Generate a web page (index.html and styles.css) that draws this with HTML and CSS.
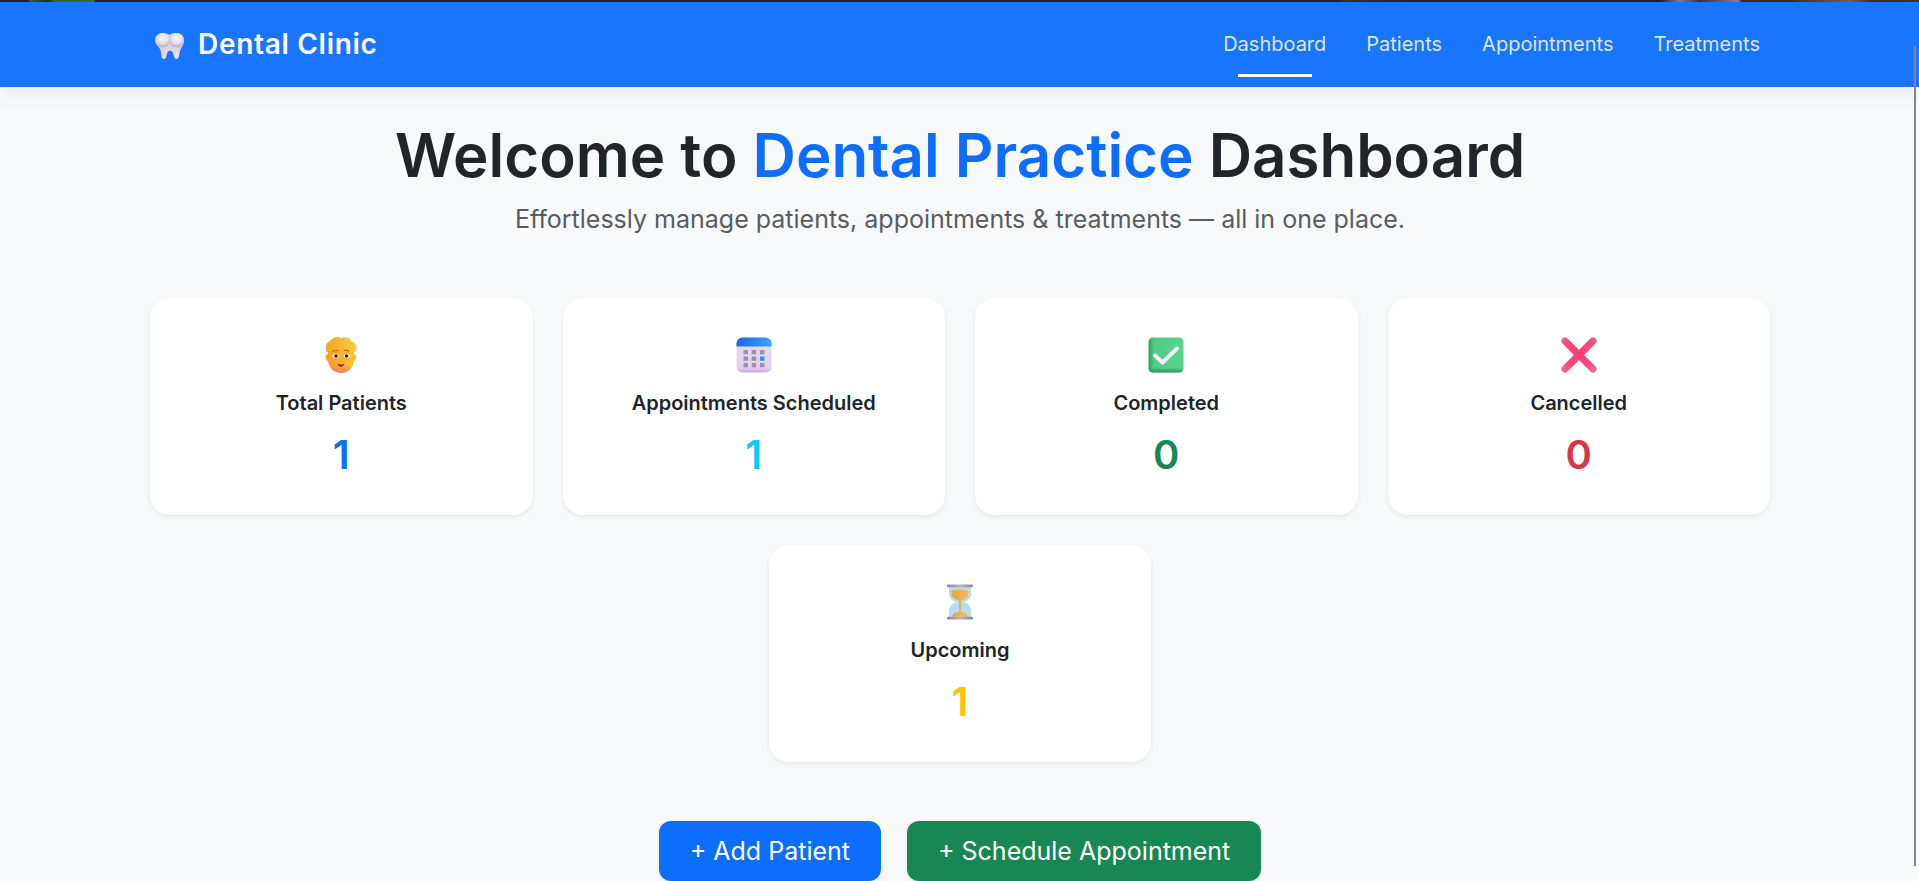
FILE: index.html
```html
<!DOCTYPE html>
<html lang="en">
<head>
<meta charset="utf-8">
<title>Dental Clinic</title>
<link rel="stylesheet" href="styles.css">
</head>
<body>
<div class="top-strip"></div>
<nav class="navbar">
  <a class="brand">
    <svg class="tooth" viewBox="0 0 28 26">
      <defs>
        <linearGradient id="t1" x1="0" y1="0" x2="0" y2="1"><stop offset="0" stop-color="#d5d0d8"/><stop offset=".5" stop-color="#dbd0e0"/><stop offset="1" stop-color="#efdcfa"/></linearGradient>
        <radialGradient id="t2" cx=".5" cy=".35" r=".6"><stop offset="0" stop-color="#f6f4f5"/><stop offset=".6" stop-color="#e4e1e5"/><stop offset="1" stop-color="#bab4c0"/></radialGradient>
      </defs>
      <path d="M0 7C0 2 4 0 8 0c3 0 5 1 6 2 1-1 3-2 6-2 5 0 8 3 8 7 0 4-2 6-3 8-2 4-1 10-4 10-4 0-2-8-6.500-8s-2 8-6 8C5 25 7 18 4 14 2 12 0 10 0 7z" fill="url(#t1)"/>
      <circle cx="7.500" cy="7" r="7" fill="url(#t2)"/><circle cx="21" cy="7" r="7" fill="url(#t2)"/>
    </svg>
    <span>Dental Clinic</span>
  </a>
  <div class="links">
    <a class="link active">Dashboard</a>
    <a class="link">Patients</a>
    <a class="link">Appointments</a>
    <a class="link">Treatments</a>
  </div>
</nav>
<main class="page">
  <h1 class="title">Welcome to <span class="accent">Dental Practice</span> Dashboard</h1>
  <p class="subtitle">Effortlessly manage patients, appointments &amp; treatments — all in one place.</p>
  <section class="cards">
    <article class="card">
      <svg class="icon" viewBox="0 0 36 36">
        <defs>
          <linearGradient id="p1" x1="0" y1=".3" x2="1" y2="0"><stop offset="0" stop-color="#f99b2e"/><stop offset="1" stop-color="#ffd02b"/></linearGradient>
          <linearGradient id="p2" x1="0" y1="0" x2="0" y2="1"><stop offset=".7" stop-color="#ef8068" stop-opacity="0"/><stop offset="1" stop-color="#ef8068"/></linearGradient>
          <linearGradient id="p3" x1="0" y1="0" x2="1" y2="0"><stop offset="0" stop-color="#e8ac27"/><stop offset="1" stop-color="#f6d03c"/></linearGradient>
        </defs>
        <path d="M5 5h26v12c3 0 3 6 0 7-1 7-6 12-13 12S6 31 5 24c-3-1-3-7 0-7z" fill="url(#p1)"/>
        <path d="M5 11h26v13c-1 7-6 12-13 12S6 31 5 24z" fill="url(#p2)"/>
        <path d="M4 16C2 12 2 6 7 4c3-4 8-5 11-3 5-2 9 0 10 3 6 2 7 8 4 12-1-2-1-4-3-5-4 1-7 0-9-3-4-1-8 0-11 2-2 1-4 4-5 6z" fill="url(#p3)"/>
        <path d="M9.500 14.800q3-2.500 6-1M21 13.800q3-1.500 5 1" fill="none" stroke="#b56727" stroke-width="1.200"/>
        <ellipse cx="12.500" cy="19" rx="3.300" ry="2.100" fill="#fff"/><ellipse cx="24" cy="19" rx="3.300" ry="2.100" fill="#fff"/>
        <circle cx="13" cy="19" r="1.800" fill="#321c26"/><circle cx="23.600" cy="19" r="1.800" fill="#321c26"/>
        <path d="M14.500 26.800q3.500 1.500 7 0-1 3-3.500 3t-3.500-3z" fill="#971c58"/>
      </svg>
      <h2 class="label">Total Patients</h2><p class="value blue">1</p>
    </article>
    <article class="card">
      <svg class="icon" viewBox="0 0 36 36">
        <defs>
          <linearGradient id="c1" x1="0" y1="0" x2="0" y2="1"><stop offset="0" stop-color="#e2dced"/><stop offset=".85" stop-color="#e3d2ee"/><stop offset="1" stop-color="#cfa8dc"/></linearGradient>
          <linearGradient id="c2"><stop offset="0" stop-color="#1769e6"/><stop offset="1" stop-color="#38a5ff"/></linearGradient>
        </defs>
        <rect x=".5" y=".5" width="35" height="35" rx="6" fill="url(#c1)"/>
        <path d="M.5 9.500v-3a6 6 0 0 1 6-6h23a6 6 0 0 1 6 6v3z" fill="url(#c2)"/>
        <path d="M7.500 13h4.500v4.200H7.500zM15.700 13h4.500v4.200h-4.500zM24 13h4.500v4.200H24zM7.500 19.500h4.500v4.200H7.500zM15.700 19.500h4.500v4.200h-4.500zM7.500 26h4.500v4.200H7.500zM15.700 26h4.500v4.200h-4.500zM24 26h4.500v4.200H24z" fill="#9c91aa"/>
        <path d="M24 19.500h4.500v4.200H24z" fill="#2492f5"/>
      </svg>
      <h2 class="label">Appointments Scheduled</h2><p class="value cyan">1</p>
    </article>
    <article class="card">
      <svg class="icon" viewBox="0 0 36 36">
        <defs><linearGradient id="k1" x1="0" y1="0" x2="1" y2="0"><stop offset="0" stop-color="#379b64"/><stop offset=".15" stop-color="#50cb86"/><stop offset="1" stop-color="#58d48d"/></linearGradient>
        <linearGradient id="k2" x1="0" y1="0" x2="0" y2="1"><stop offset=".86" stop-color="#268655" stop-opacity="0"/><stop offset="1" stop-color="#268655" stop-opacity=".8"/></linearGradient></defs>
        <rect x=".5" y=".5" width="35" height="35" rx="4.500" fill="url(#k1)"/>
        <rect x=".5" y=".5" width="35" height="35" rx="4.500" fill="url(#k2)"/>
        <path d="M7 18.500l7.500 7L29 11.500" fill="none" stroke="#f4f0fa" stroke-width="4" stroke-linecap="round" stroke-linejoin="round"/>
      </svg>
      <h2 class="label">Completed</h2><p class="value green">0</p>
    </article>
    <article class="card">
      <svg class="icon" viewBox="0 0 36 36">
        <defs><radialGradient id="x1" gradientUnits="userSpaceOnUse" cx="18" cy="16" r="22"><stop offset="0" stop-color="#fb407a"/><stop offset=".7" stop-color="#f64878"/><stop offset="1" stop-color="#ef6690"/></radialGradient></defs>
        <path d="M4 4l28 28M32 4L4 32" stroke="url(#x1)" stroke-width="7.200" stroke-linecap="round"/>
      </svg>
      <h2 class="label">Cancelled</h2><p class="value red">0</p>
    </article>
    <article class="card">
      <svg class="icon" viewBox="0 0 36 36">
        <defs><linearGradient id="h1"><stop offset="0" stop-color="#8e8991"/><stop offset=".5" stop-color="#b8b4bb"/><stop offset="1" stop-color="#8d8991"/></linearGradient>
        <linearGradient id="h2"><stop offset="0" stop-color="#e5a33e"/><stop offset="1" stop-color="#f5bd5b"/></linearGradient></defs>
        <path d="M7 3h22v6c0 5-2 7-7 9 5 2 7 5 7 9v6H7v-6c0-4 2-7 7-9-5-2-7-4-7-9z" fill="#b6dcf9"/>
        <path d="M9.500 6.500q8.500-2 17 0V9c0 4-3 6-6 7l-1.500 1.500V28c4 0 6.500 2 7 4.700H10c.5-2.700 3-4.700 7-4.700V17.500L15.500 16c-3-1-6-3-6-7z" fill="url(#h2)"/>
        <rect x="5" y=".5" width="26" height="2.800" rx="1" fill="url(#h1)"/><rect x="5" y="32.700" width="26" height="2.800" rx="1" fill="url(#h1)"/>
      </svg>
      <h2 class="label">Upcoming</h2><p class="value yellow">1</p>
    </article>
  </section>
  <div class="actions">
    <a class="btn primary">+ Add Patient</a>
    <a class="btn success">+ Schedule Appointment</a>
  </div>
</main>
<div class="scroll-thumb"></div>
</body>
</html>
```
FILE: styles.css
```css
* { box-sizing: border-box; }
html, body { height: 881px; overflow: hidden; }
body { margin: 0; background: #f8f9fb; color: #212529; font-family: Inter, "Liberation Sans", sans-serif; }
h1, h2, p { margin: 0; }
.top-strip {
  height: 2px;
  background: linear-gradient(90deg, #2b1c29 28px, #3b5a28 30px, #27331f 48px, #3f6b2a 56px, #426b30 94px, #2b1c29 96px, #2b1c29 1335px, #3a3228 1345px, #2b1c29 1425px, #2b1c29 1660px, #8a7894 1680px, #422c47 1700px, #937b9c 1738px, #3d2824 1742px, #3d2c24 1790px, #776347 1850px, #43302c 1870px, #43302c);
}
.navbar {
  position: relative; height: 85px; padding: 0 149px 0 155px;
  display: flex; justify-content: space-between;
  background: #1975ff; color: #fff; box-shadow: 0 4px 20px rgba(0, 0, 0, .08);
}
.brand { display: flex; gap: 14px; height: 84px; align-items: center; font-size: 28px; font-weight: 600; letter-spacing: .7px; }
.tooth { width: 29px; height: 27px; margin-top: 4px; }
.links { display: flex; gap: 20px; height: 84px; align-items: center; }
.link { position: relative; padding: 12px 10px; font-size: 20px; line-height: 30px; color: rgba(255, 255, 255, .85); }
.active::after { content: ""; position: absolute; left: 25px; width: 74px; top: 57px; height: 3px; background: #fff; }
.page { width: 1620px; margin: 0 0 0 150px; padding-top: 32px; text-align: center; }
.title { font-size: 60px; line-height: 72px; font-weight: 600; }
.accent { color: #0d6efd; }
.subtitle { margin-top: 10px; font-size: 25px; line-height: 37px; color: #595c5f; }
.cards { margin-top: 60px; display: flex; flex-wrap: wrap; justify-content: center; gap: 29.5px 30px; }
.card {
  width: 382.5px; height: 217px; padding-top: 39px; border-radius: 20px; background: #fff;
  box-shadow: 0 2px 5px rgba(0, 0, 0, .08);
  display: flex; flex-direction: column; align-items: center;
}
.icon { width: 36px; height: 36px; }
.label { margin-top: 18px; font-size: 20px; line-height: 24px; font-weight: 600; }
.value { margin-top: 16px; font-size: 40px; line-height: 48px; font-weight: 600; }
.blue { color: #0d6efd; }
.cyan { color: #0dcaf0; }
.green { color: #198754; }
.red { color: #dc3545; }
.yellow { color: #ffc107; }
.actions { margin-top: 59.5px; display: flex; justify-content: center; gap: 26px; }
.btn { height: 60px; padding: 0 31px; border-radius: 12px; font-size: 25px; line-height: 60px; color: #fff; white-space: nowrap; box-shadow: 0 2px 5px rgba(0, 0, 0, .08); }
.primary { background: #0d6efd; }
.success { background: #198754; }
.scroll-thumb { position: absolute; left: 1914px; top: 46px; width: 2px; height: 820px; background: #858585; }
```
